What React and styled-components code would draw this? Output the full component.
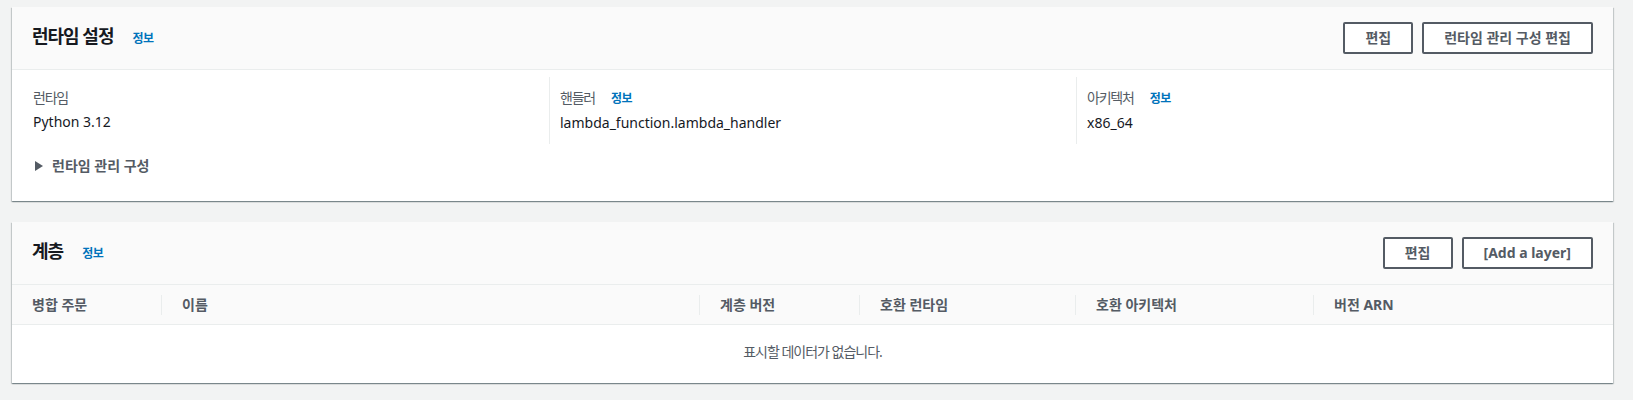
import React from 'react';
import styled, { createGlobalStyle } from 'styled-components';

const GlobalStyle = createGlobalStyle`
  * {
    box-sizing: border-box;
  }
  body {
    margin: 0;
    background: #f2f3f3;
    font-family: 'Noto Sans', 'Noto Sans CJK KR', sans-serif;
    font-size: 14px;
    line-height: 20px;
    color: #16191f;
  }
`;

const Page = styled.main`
  display: flex;
  flex-direction: column;
  gap: 21px;
  padding: 7px 20px 17px 12px;
`;

const Card = styled.section`
  background: #fff;
  box-shadow: 0 1px 1px 0 rgba(0, 28, 36, 0.3), 1px 1px 1px 0 rgba(0, 28, 36, 0.15),
    -1px 1px 1px 0 rgba(0, 28, 36, 0.15);
`;

const CardHeader = styled.header`
  display: flex;
  align-items: center;
  justify-content: space-between;
  padding: 15px 20px;
  background: #fafafa;
  border-bottom: 1px solid #eaeded;
`;

const TitleRow = styled.div`
  display: flex;
  align-items: baseline;
  padding-bottom: 2px;
`;

const Title = styled.h2`
  margin: 0;
  font-size: 18px;
  line-height: 22px;
  font-weight: 700;
  letter-spacing: -1px;
  color: #16191f;
`;

const InfoLink = styled.a`
  margin-left: ${(p) => (p.$small ? '16px' : '19px')};
  font-size: 12px;
  font-weight: 700;
  letter-spacing: -0.5px;
  color: #0073bb;
  text-decoration: none;
  cursor: pointer;
`;

const Actions = styled.div`
  display: flex;
  gap: 9px;
`;

const Button = styled.button`
  height: 32px;
  padding: 0 20px;
  border: 2px solid #545b64;
  border-radius: 2px;
  background: #fff;
  color: #545b64;
  font-family: inherit;
  font-size: 14px;
  font-weight: 700;
  line-height: 28px;
  cursor: pointer;
`;

const CardBody = styled.div`
  padding: 7px 20px 25px;
`;

const Columns = styled.div`
  display: grid;
  grid-template-columns: repeat(3, 1fr);
  margin: 0 -10px;
`;

const Column = styled.div`
  padding: 11px 10px;
  border-left: 1px solid ${(p) => (p.$first ? 'transparent' : '#eaeded')};
`;

const Label = styled.div`
  display: flex;
  align-items: baseline;
  color: #545b64;
  letter-spacing: -1.2px;
  margin-bottom: 4px;
`;

const Value = styled.div`
  color: #16191f;
`;

const Expand = styled.div`
  display: flex;
  align-items: center;
  gap: 4px;
  margin-top: 12px;
  color: #545b64;
  font-weight: 700;
  cursor: pointer;
`;

const TableHead = styled.div`
  display: grid;
  grid-template-columns: 150px 538px 160px 216px 238px 1fr;
  height: 40px;
  background: #fafafa;
  border-bottom: 1px solid #eaeded;
`;

const HeadCell = styled.div`
  display: flex;
  align-items: center;
  justify-content: space-between;
  padding-left: 20px;
  color: #545b64;
  font-weight: 700;
`;

const Divider = styled.span`
  width: 1px;
  height: 20px;
  background: #eaeded;
`;

const Empty = styled.div`
  padding: 17px 20px 21px;
  text-align: center;
  color: #545b64;
  letter-spacing: -1px;
`;

const Caret = () => (
  <svg width="16" height="16" viewBox="0 0 16 16" aria-hidden="true">
    <polygon points="3,3 11,8 3,13" fill="#545b64" />
  </svg>
);

const columns = ['병합 주문', '이름', '계층 버전', '호환 런타임', '호환 아키텍처', '버전 ARN'];

export default function App() {
  return (
    <>
      <GlobalStyle />
      <Page>
        <Card>
          <CardHeader>
            <TitleRow>
              <Title>런타임 설정</Title>
              <InfoLink>정보</InfoLink>
            </TitleRow>
            <Actions>
              <Button>편집</Button>
              <Button>런타임 관리 구성 편집</Button>
            </Actions>
          </CardHeader>
          <CardBody>
            <Columns>
              <Column $first>
                <Label>런타임</Label>
                <Value>Python 3.12</Value>
              </Column>
              <Column>
                <Label>
                  핸들러 <InfoLink $small>정보</InfoLink>
                </Label>
                <Value>lambda_function.lambda_handler</Value>
              </Column>
              <Column>
                <Label>
                  아키텍처 <InfoLink $small>정보</InfoLink>
                </Label>
                <Value>x86_64</Value>
              </Column>
            </Columns>
            <Expand>
              <Caret />
              런타임 관리 구성
            </Expand>
          </CardBody>
        </Card>

        <Card>
          <CardHeader>
            <TitleRow>
              <Title>계층</Title>
              <InfoLink>정보</InfoLink>
            </TitleRow>
            <Actions>
              <Button>편집</Button>
              <Button>[Add a layer]</Button>
            </Actions>
          </CardHeader>
          <TableHead>
            {columns.map((c, i) => (
              <HeadCell key={c}>
                {c}
                {i < columns.length - 1 && <Divider />}
              </HeadCell>
            ))}
          </TableHead>
          <Empty>표시할 데이터가 없습니다.</Empty>
        </Card>
      </Page>
    </>
  );
}
